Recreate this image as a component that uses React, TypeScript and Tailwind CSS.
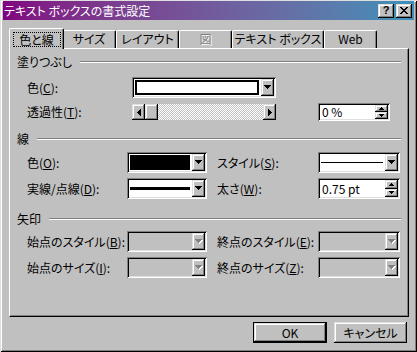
import React from "react";

// Win98 style bevels
const raised =
  "shadow-[inset_-1px_-1px_#000,inset_1px_1px_#dfdfdf,inset_-2px_-2px_#808080,inset_2px_2px_#fff]";
const sunken =
  "shadow-[inset_1px_1px_#808080,inset_-1px_-1px_#fff,inset_2px_2px_#000,inset_-2px_-2px_#dfdfdf]";

const DownArrow = ({ disabled }: { disabled?: boolean }) => (
  <svg width="8" height="5" viewBox="0 0 8 5" shapeRendering="crispEdges">
    {disabled && (
      <path d="M1 1h7v1H1zM2 2h5v1H2zM3 3h3v1H3zM4 4h1v1H4z" fill="#fff" />
    )}
    <path
      d="M0 0h7v1H0zM1 1h5v1H1zM2 2h3v1H2zM3 3h1v1H3z"
      fill={disabled ? "#808080" : "#000"}
    />
  </svg>
);

const SmallArrow = ({ up }: { up?: boolean }) => (
  <svg width="5" height="3" viewBox="0 0 5 3" shapeRendering="crispEdges">
    <path
      d={up ? "M2 0h1v1H2zM1 1h3v1H1zM0 2h5v1H0z" : "M0 0h5v1H0zM1 1h3v1H1zM2 2h1v1H2z"}
      fill="#000"
    />
  </svg>
);

const SideArrow = ({ left }: { left?: boolean }) => (
  <svg width="4" height="7" viewBox="0 0 4 7" shapeRendering="crispEdges">
    <path
      d={
        left
          ? "M3 0h1v7H3zM2 1h1v5H2zM1 2h1v3H1zM0 3h1v1H0z"
          : "M0 0h1v7H0zM1 1h1v5H1zM2 2h1v3H2zM3 3h1v1H3z"
      }
      fill="#000"
    />
  </svg>
);

function Combo({
  className,
  disabled,
  children,
}: {
  className: string;
  disabled?: boolean;
  children?: React.ReactNode;
}) {
  return (
    <div
      className={`flex h-[21px] p-[2px] ${sunken} ${disabled ? "bg-[#c0c0c0]" : "bg-white"} ${className}`}
    >
      <div className="flex min-w-0 flex-1 py-[1px] pl-[1px] pr-[2px]">{children}</div>
      <div className={`flex w-[13px] items-center justify-center bg-[#c0c0c0] ${raised}`}>
        <DownArrow disabled={disabled} />
      </div>
    </div>
  );
}

function Spin({ className, value }: { className: string; value: string }) {
  return (
    <div className={`flex p-[2px] bg-white ${sunken} ${className}`}>
      <div className="flex flex-1 items-center pl-[2px]">{value}</div>
      <div className="flex w-[13px] flex-col">
        <div className={`flex flex-1 items-center justify-center bg-[#c0c0c0] ${raised}`}>
          <SmallArrow up />
        </div>
        <div className={`flex flex-1 items-center justify-center bg-[#c0c0c0] ${raised}`}>
          <SmallArrow />
        </div>
      </div>
    </div>
  );
}

function Heading({ text, className }: { text: string; className: string }) {
  return (
    <div className={`flex h-[14px] items-center gap-[8px] ${className}`}>
      <span>{text}</span>
      <div className="h-[2px] flex-1 border-t border-b border-t-[#808080] border-b-white" />
    </div>
  );
}

function Label({ text, k, rest, className }: { text: string; k: string; rest?: string; className: string }) {
  return (
    <span className={`shrink-0 ${className}`}>
      {text}(<u>{k}</u>){rest ?? ":"}
    </span>
  );
}

function Tab({ label, active, disabled, className }: { label: string; active?: boolean; disabled?: boolean; className: string }) {
  if (active) {
    return (
      <div
        className={`relative z-10 -mx-[2px] -mb-[1px] flex h-[21px] items-start justify-center rounded-t-[2px] border-t border-l border-r border-t-white border-l-white border-r-black bg-[#c0c0c0] pt-[3px] shadow-[inset_-1px_0_#808080] ${className}`}
      >
        <span className="flex h-[15px] w-[48px] items-center justify-center border border-dotted border-black">
          {label}
        </span>
      </div>
    );
  }
  return (
    <div
      className={`flex h-[18px] items-center justify-center rounded-t-[2px] border-t border-l border-r border-t-white border-l-white border-r-black pb-[1px] shadow-[inset_-1px_0_#808080] ${className}`}
    >
      <span className={disabled ? "text-[#808080] [text-shadow:1px_1px_#fff]" : ""}>{label}</span>
    </div>
  );
}

export default function App() {
  return (
    <div className="flex h-[352px] w-[417px] flex-col bg-[#c0c0c0] font-['Noto_Sans_CJK_JP','Noto_Sans',sans-serif] text-[12px] leading-none text-black [font-feature-settings:'palt'] shadow-[inset_1px_1px_#dfdfdf,inset_-1px_-1px_#000,inset_2px_2px_#fff,inset_-2px_-2px_#808080]">
      {/* title bar */}
      <div className="mx-[3px] mt-[1px] flex h-[19px] items-center bg-linear-to-r from-[#800080] to-[#3a90b8]">
        <span className="pl-[1px] text-[12px] text-white">テキスト ボックスの書式設定</span>
        <div className="ml-auto mr-[2px] flex gap-[2px]">
          <div className={`flex h-[14px] w-[16px] items-center justify-center bg-[#c0c0c0] text-[11px] font-bold ${raised}`}>
            <span className="font-['Liberation_Sans',sans-serif] leading-none">?</span>
          </div>
          <div className={`flex h-[14px] w-[16px] items-center justify-center bg-[#c0c0c0] ${raised}`}>
            <svg width="8" height="7" viewBox="0 0 8 7" shapeRendering="crispEdges">
              <path
                d="M0 0h2v1H0zM6 0h2v1H6zM1 1h2v1H1zM5 1h2v1H5zM2 2h4v1H2zM3 3h2v1H3zM2 4h4v1H2zM1 5h2v1H1zM5 5h2v1H5zM0 6h2v1H0zM6 6h2v1H6z"
                fill="#000"
              />
            </svg>
          </div>
        </div>
      </div>

      {/* tabs */}
      <div className="ml-[11px] mt-[8px] flex h-[20px] items-end">
        <Tab label="色と線" active className="w-[55px]" />
        <Tab label="サイズ" className="w-[54px]" />
        <Tab label="レイアウト" className="w-[63px]" />
        <Tab label="図" disabled className="w-[53px]" />
        <Tab label="テキスト ボックス" className="w-[92px]" />
        <Tab label="Web" className="w-[53px]" />
      </div>

      {/* tab panel */}
      <div className="ml-[9px] flex h-[269px] w-[400px] flex-col border-t border-l border-r border-b border-t-white border-l-white border-r-black border-b-black pl-[7px] pr-[7px] shadow-[inset_-1px_-1px_#808080]">
        <Heading text="塗りつぶし" className="mt-[6px]" />
        <div className="mt-[8px] flex h-[21px] items-center">
          <Label text="色" k="C" className="ml-[10px] w-[105px]" />
          <Combo className="w-[144px]">
            <div className="flex-1 border-2 border-black bg-white" />
          </Combo>
        </div>
        <div className="mt-[5px] flex h-[18px] items-center">
          <Label text="透過性" k="T" className="ml-[10px] w-[105px]" />
          <div className="flex h-[16px] w-[144px]">
            <div className={`flex w-[13px] items-center justify-center ${raised}`}>
              <SideArrow left />
            </div>
            <div className={`w-[13px] ${raised}`} />
            <div className="flex-1 bg-[repeating-conic-gradient(#c0c0c0_0_25%,#fff_0_50%)] bg-[length:2px_2px]" />
            <div className={`flex w-[13px] items-center justify-center ${raised}`}>
              <SideArrow />
            </div>
          </div>
          <Spin className="ml-[42px] h-[18px] w-[72px]" value="0 %" />
        </div>

        <Heading text="線" className="mt-[11px]" />
        <div className="mt-[6px] flex h-[21px] items-center">
          <Label text="色" k="O" className="ml-[10px] w-[100px]" />
          <Combo className="w-[80px]">
            <div className="flex-1 bg-black" />
          </Combo>
          <Label text="スタイル" k="S" className="ml-[10px] w-[101px]" />
          <Combo className="w-[82px]">
            <div className="flex flex-1 items-center">
              <div className="h-[1px] flex-1 bg-black" />
            </div>
          </Combo>
        </div>
        <div className="mt-[5px] flex h-[21px] items-center">
          <Label text="実線/点線" k="D" className="ml-[10px] w-[100px]" />
          <Combo className="w-[80px]">
            <div className="flex flex-1 items-center">
              <div className="h-[3px] flex-1 bg-black" />
            </div>
          </Combo>
          <Label text="太さ" k="W" className="ml-[10px] w-[101px]" />
          <Spin className="h-[21px] w-[82px]" value="0.75 pt" />
        </div>

        <Heading text="矢印" className="mt-[13px]" />
        <div className="mt-[5px] flex h-[21px] items-center">
          <Label text="始点のスタイル" k="B" className="ml-[10px] w-[100px]" />
          <Combo className="w-[80px]" disabled />
          <Label text="終点のスタイル" k="E" className="ml-[10px] w-[101px]" />
          <Combo className="w-[82px]" disabled />
        </div>
        <div className="mt-[5px] flex h-[21px] items-center">
          <Label text="始点のサイズ" k="I" className="ml-[10px] w-[100px]" />
          <Combo className="w-[80px]" disabled />
          <Label text="終点のサイズ" k="Z" className="ml-[10px] w-[101px]" />
          <Combo className="w-[82px]" disabled />
        </div>
      </div>

      {/* dialog buttons */}
      <div className="mt-[5px] flex justify-end gap-[7px] pr-[10px]">
        <div className="h-[21px] w-[74px] border border-black">
          <div className={`flex h-full w-full items-center justify-center ${raised}`}>OK</div>
        </div>
        <div className={`flex h-[21px] w-[73px] items-center justify-center ${raised}`}>キャンセル</div>
      </div>
    </div>
  );
}
